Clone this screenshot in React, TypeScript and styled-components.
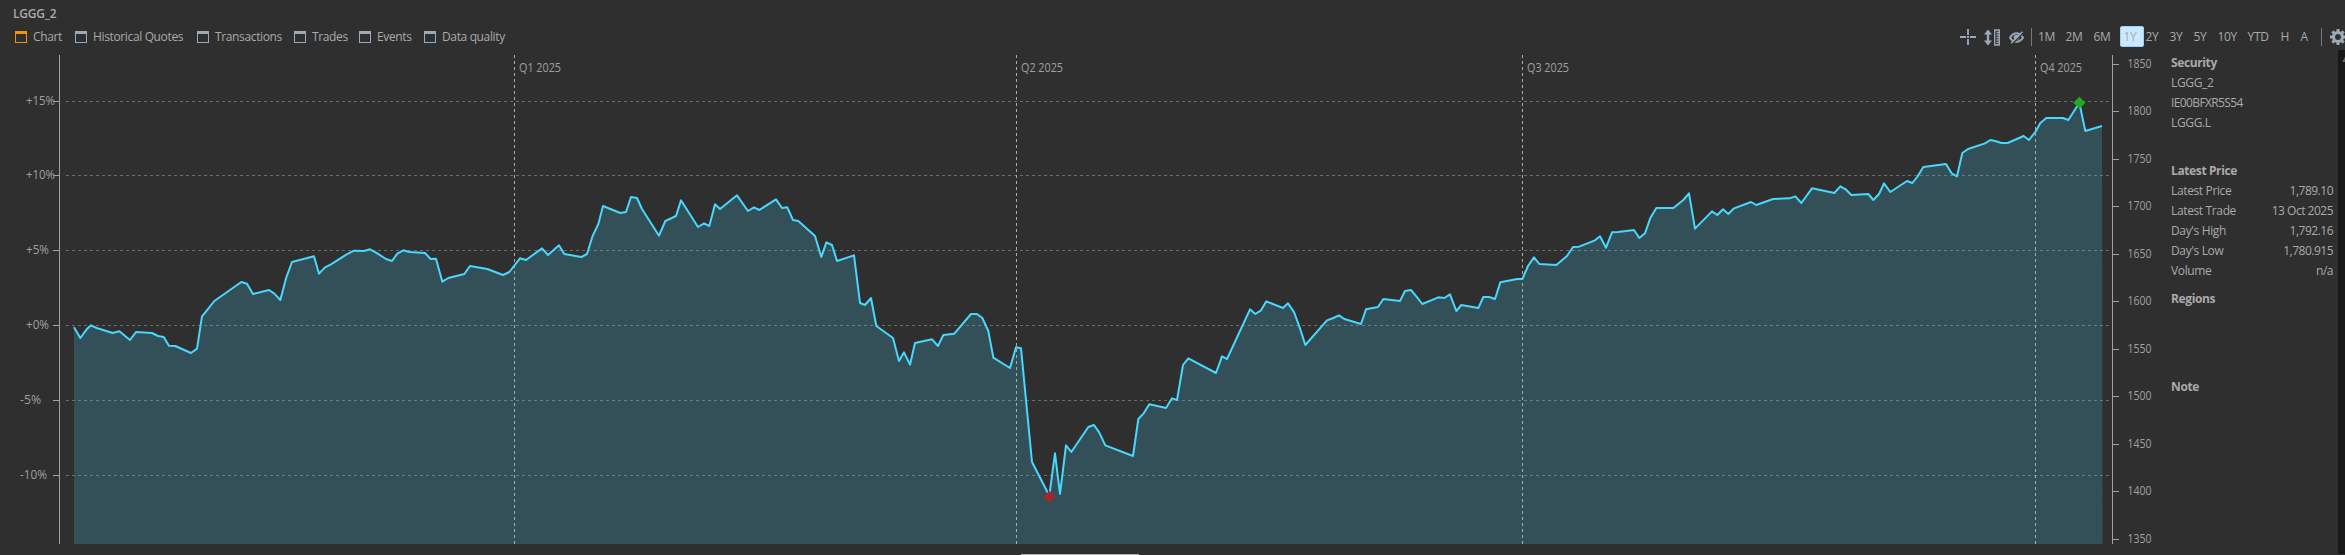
import React from "react";
import styled, { createGlobalStyle } from "styled-components";

const GlobalStyle = createGlobalStyle`
  * { box-sizing: border-box; }
  body { margin: 0; background: #2f2f2f; overflow: hidden; }
`;

const FONT = `"Open Sans", "Noto Sans", sans-serif`;

const Page = styled.div`
  width: 2345px;
  height: 555px;
  display: flex;
  flex-direction: column;
  background: #2f2f2f;
  color: #aaaaaa;
  font: 12px/20px ${FONT};
  letter-spacing: -0.36px;
  overflow: hidden;
`;

const Title = styled.header`
  height: 26px;
  padding: 4px 0 0 13px;
  font-weight: 600;
  letter-spacing: -0.2px;
  flex: none;
`;

const Toolbar = styled.div`
  height: 24px;
  flex: none;
  display: flex;
  justify-content: space-between;
  align-items: flex-start;
`;

const Tabs = styled.nav`
  display: flex;
  padding-left: 15px;
`;

const Tab = styled.div<{ $width: number }>`
  width: ${(p) => p.$width}px;
  height: 22px;
  display: flex;
  align-items: center;
  gap: 6px;
  white-space: nowrap;
`;

const TabIcon = styled.span<{ $active?: boolean }>`
  width: 12px;
  height: 12px;
  flex: none;
  border: 1px solid ${(p) => (p.$active ? "#f39200" : "#9aaab8")};
  border-top-width: 3px;
`;

const Tools = styled.div`
  display: flex;
  width: 385px;
  height: 22px;
  align-items: center;
`;

const Tool = styled.span<{ $width: number }>`
  width: ${(p) => p.$width}px;
  height: 22px;
  flex: none;
  display: flex;
  align-items: center;
`;

const Divider = styled.span<{ $after: number }>`
  width: 1px;
  height: 18px;
  flex: none;
  background: #77797b;
  margin-right: ${(p) => p.$after}px;
`;

const Range = styled.span<{ $width: number; $selected?: boolean }>`
  width: ${(p) => p.$width}px;
  height: ${(p) => (p.$selected ? 21 : 22)}px;
  align-self: flex-start;
  flex: none;
  line-height: ${(p) => (p.$selected ? 20 : 22)}px;
  letter-spacing: -0.3px;
  white-space: nowrap;
  ${(p) =>
    p.$selected &&
    `background: #cce8ff; border: 1px solid #99d1ff; border-radius: 2px; padding-left: 3px; margin-right: 2px;`}
`;

const Body = styled.div`
  flex: 1;
  min-height: 0;
  display: flex;
`;

const ChartArea = styled.svg`
  width: 2165px;
  height: 504px;
  flex: none;
  display: block;
`;

const AxisText = styled.text`
  font: 12px ${FONT};
  letter-spacing: 0;
  fill: #a0a0a0;
`;

const Side = styled.aside`
  width: 173px;
  flex: none;
  padding: 3px 5px 0 6px;
`;

const Group = styled.section<{ $gap: number }>`
  margin-bottom: ${(p) => p.$gap}px;
`;

const Heading = styled.div`
  font-weight: 700;
  letter-spacing: -0.38px;
  height: 20px;
`;

const Row = styled.div<{ $tight?: boolean }>`
  display: flex;
  justify-content: space-between;
  height: 20px;
  white-space: nowrap;
  ${(p) => p.$tight && "letter-spacing: -0.62px;"}
`;

const Value = styled.span`
  letter-spacing: -0.5px;
`;

const Scroll = styled.div`
  flex: 1;
  background: #181818;
  display: flex;
  justify-content: flex-end;
  align-items: flex-start;
  padding-top: 7px;
`;

const Footer = styled.div`
  height: 1px;
  flex: none;
  padding-left: 1021px;
`;

const Grip = styled.div`
  width: 118px;
  height: 1px;
  background: #b4b4b4;
`;

const tabs = [
  { label: "Chart", width: 60, active: true },
  { label: "Historical Quotes", width: 122 },
  { label: "Transactions", width: 97 },
  { label: "Trades", width: 65 },
  { label: "Events", width: 65 },
  { label: "Data quality", width: 90 },
];

const ranges = [
  { label: "1M", width: 27.5 },
  { label: "2M", width: 28 },
  { label: "6M", width: 26 },
  { label: "1Y", width: 24, selected: true },
  { label: "2Y", width: 24 },
  { label: "3Y", width: 24 },
  { label: "5Y", width: 24 },
  { label: "10Y", width: 30 },
  { label: "YTD", width: 33 },
  { label: "H", width: 20 },
  { label: "A", width: 20 },
];

const quote = [
  ["Latest Price", "1,789.10"],
  ["Latest Trade", "13 Oct 2025"],
  ["Day's High", "1,792.16"],
  ["Day's Low", "1,780.915"],
  ["Volume", "n/a"],
];

const percents: [string, number, number, number][] = [
  ["+15%", 101, 26, 29],
  ["+10%", 175, 26, 29],
  ["+5%", 250, 26, 23],
  ["+0%", 325, 26, 23],
  ["-5%", 400, 20, 21],
  ["-10%", 475, 20, 27],
];

const prices: [number, number][] = [
  [1850, 64], [1800, 111], [1750, 159], [1700, 206], [1650, 254], [1600, 301],
  [1550, 349], [1500, 396], [1450, 444], [1400, 491], [1350, 539],
];

const quarters: [string, number][] = [
  ["Q1 2025", 514], ["Q2 2025", 1016], ["Q3 2025", 1522], ["Q4 2025", 2035],
];

// Closing prices as x,y pairs, three units to a pixel.
const series = `
222,982 241,1014 260,988 273,976 290,984 338,999 358,994 390,1020 408,996 456,999 474,1008 491,1011
507,1037 526,1038 573,1059 591,1046 606,949 623,928 643,903 724,846 741,851 759,882 807,870 823,881
841,900 859,832 876,786 942,769 957,821 975,802 993,793 1040,763 1062,752 1092,753 1110,748 1127,757
1158,777 1176,783 1192,761 1210,751 1228,756 1275,759 1292,777 1308,776 1327,845 1345,834 1393,822
1410,798 1462,807 1509,825 1528,816 1560,775 1578,780 1626,745 1644,765 1677,736 1693,762 1744,771
1761,762 1777,710 1795,672 1809,618 1861,639 1878,636 1893,591 1911,594 1926,627 1977,707 1996,663
2028,648 2043,601 2094,681 2112,670 2128,678 2145,613 2160,627 2211,586 2244,633 2262,622 2278,630
2328,598 2346,624 2362,622 2379,660 2395,663 2445,708 2464,771 2479,727 2496,735 2511,783 2562,766
2580,909 2595,915 2613,894 2629,978 2679,1014 2697,1083 2712,1057 2730,1094 2745,1029 2796,1018
2814,1038 2830,1005 2863,1001 2913,942 2931,942 2947,954 2965,993 2980,1073 3030,1104 3048,1042
3063,1045 3096,1386 3148,1487 3165,1360 3180,1482 3198,1336 3214,1356 3265,1281 3282,1275 3298,1298
3316,1336 3399,1368 3415,1257 3431,1240 3448,1213 3498,1224 3516,1195 3531,1200 3549,1095 3565,1075
3648,1119 3666,1069 3681,1077 3750,928 3766,942 3783,931 3799,904 3849,924 3864,910 3882,936
3900,985 3916,1035 3981,961 4000,954 4017,946 4033,957 4083,972 4098,928 4134,921 4150,897 4200,903
4215,873 4233,870 4249,889 4267,912 4315,892 4333,894 4350,883 4369,933 4384,915 4435,924 4450,891
4467,891 4485,897 4501,847 4552,837 4567,837 4584,798 4602,772 4618,792 4669,795 4701,768 4719,741
4737,740 4785,721 4800,709 4818,743 4836,697 4854,696 4902,690 4918,714 4935,700 4951,654 4969,624
5020,624 5050,600 5067,580 5085,686 5136,634 5152,645 5169,628 5185,642 5202,625 5253,606 5269,615
5319,597 5368,595 5386,589 5404,609 5436,565 5503,579 5521,559 5537,568 5554,585 5605,582 5620,600
5637,582 5652,550 5671,576 5721,543 5737,549 5753,529 5770,501 5838,492 5855,520 5871,529 5887,459
5904,447 5955,430 5971,420 5986,423 6004,429 6023,429 6071,408 6087,420 6106,396 6121,369 6139,354
6189,354 6205,360 6238,308 6256,393 6306,378`;

const points = series
  .trim()
  .split(/\s+/)
  .map((pair) => pair.split(",").map((v) => (Number(v) / 3).toFixed(2)).join(","))
  .join(" ");

const Chart = () => (
  <ChartArea viewBox="0 50 2165 504">
    {percents.map(([label, y, x, w]) => (
      <g key={label}>
        <path d={`M66 ${y + 0.5}H2112`} stroke="#6c6c6c" strokeDasharray="3 3" />
        <path d={`M53 ${y + 0.5}h6`} stroke="#a0a0a0" />
        <AxisText x={x} y={y + 4} textLength={w} lengthAdjust="spacingAndGlyphs">{label}</AxisText>
      </g>
    ))}
    {quarters.map(([label, x]) => (
      <g key={label}>
        <path d={`M${x + 0.5} 55V544`} stroke="#acacac" strokeDasharray="3 3" />
        <AxisText x={x + 5} y={72} textLength={42} lengthAdjust="spacingAndGlyphs">{label}</AxisText>
      </g>
    ))}
    <polygon points={`74,544 ${points} 2102.5,544`} fill="#47d7ff" fillOpacity="0.2" />
    <polyline points={points} fill="none" stroke="#47d7ff" strokeWidth="2" strokeLinejoin="round" />
    <path d="M59.5 55V544M2112.5 55V544" stroke="#a0a0a0" />
    {prices.map(([label, y]) => (
      <g key={label}>
        <path d={`M2113 ${y + 0.5}h6`} stroke="#a0a0a0" />
        <AxisText x={2127.5} y={y + 4} textLength={24} lengthAdjust="spacingAndGlyphs">{label}</AxisText>
      </g>
    ))}
    <polygon points="2079.4,96.7 2085.4,102.7 2079.4,108.7 2073.4,102.7" fill="#1fad1f" />
    <polygon points="1049.4,490.700 1055.4,496.700 1049.4,502.700 1043.4,496.700" fill="#a8252b" />
  </ChartArea>
);

const CrosshairIcon = () => (
  <svg width="16" height="16" viewBox="0 0 16 16">
    <path d="M8 0v6M8 10v6M0 8h6M10 8h6M7 8h2" stroke="#9aaab8" strokeWidth="1.8" />
  </svg>
);

const MeasureIcon = () => (
  <svg width="17" height="17" viewBox="0 0 17 17">
    <path d="M4 .5l4 5H5.2v6H8l-4 5-4-5h2.8v-6H0z" fill="#9aaab8" />
    <path d="M10.7 1h4.6v15h-4.600zM12.500 3.500H15M12.500 6H15M12.500 8.500H15M12.500 11H15M12.500 13.500H15" fill="none" stroke="#9aaab8" strokeWidth="1.300" />
  </svg>
);

const HiddenIcon = () => (
  <svg width="15" height="13" viewBox="0 0 15 13">
    <path d="M1 6.800C3 3.400 5.200 2.200 7.500 2.200S12 3.400 14 6.800c-2 3-4.200 4-6.500 4S3 9.800 1 6.800z" fill="none" stroke="#9aaab8" strokeWidth="1.900" />
    <circle cx="7.500" cy="6.500" r="2.800" fill="#9aaab8" />
    <path d="M3.300 12.800L14.800 1.600" stroke="#2f2f2f" strokeWidth="1.200" />
    <path d="M2 12.300L13.500 .8" stroke="#9aaab8" strokeWidth="1.400" />
  </svg>
);

const GearIcon = () => (
  <svg width="16" height="16" viewBox="0 0 16 16">
    <circle cx="8" cy="8" r="4.500" fill="none" stroke="#9aaab8" strokeWidth="3.200" />
    <path
      d="M8 0v3M8 13v3M0 8h3M13 8h3M2.340 2.340l2.100 2.100M11.560 11.560l2.100 2.100M2.340 13.660l2.100-2.100M11.560 4.440l2.100-2.100"
      stroke="#9aaab8"
      strokeWidth="3"
    />
  </svg>
);

export default function App() {
  return (
    <Page>
      <GlobalStyle />
      <Title>LGGG_2</Title>
      <Toolbar>
        <Tabs>
          {tabs.map((t) => (
            <Tab key={t.label} $width={t.width}>
              <TabIcon $active={t.active} />
              {t.label}
            </Tab>
          ))}
        </Tabs>
        <Tools>
          <Tool $width={24}><CrosshairIcon /></Tool>
          <Tool $width={24.5}><MeasureIcon /></Tool>
          <Tool $width={22.5}><HiddenIcon /></Tool>
          <Divider $after={6} />
          {ranges.map((r) => (
            <Range key={r.label} $width={r.width} $selected={r.selected}>{r.label}</Range>
          ))}
          <Divider $after={8} />
          <Tool $width={16}><GearIcon /></Tool>
        </Tools>
      </Toolbar>
      <Body>
        <Chart />
        <Side>
          <Group $gap={28}>
            <Heading>Security</Heading>
            <Row>LGGG_2</Row>
            <Row $tight>IE00BFXR5S54</Row>
            <Row>LGGG.L</Row>
          </Group>
          <Group $gap={8}>
            <Heading>Latest Price</Heading>
            {quote.map(([name, value]) => (
              <Row key={name}>
                <span>{name}</span>
                <Value>{value}</Value>
              </Row>
            ))}
          </Group>
          <Group $gap={68}>
            <Heading>Regions</Heading>
          </Group>
          <Heading>Note</Heading>
        </Side>
        <Scroll>
          <svg width="3" height="6" viewBox="0 0 3 6">
            <path d="M0 5L3 0v5z" fill="#606060" />
          </svg>
        </Scroll>
      </Body>
      <Footer>
        <Grip />
      </Footer>
    </Page>
  );
}
